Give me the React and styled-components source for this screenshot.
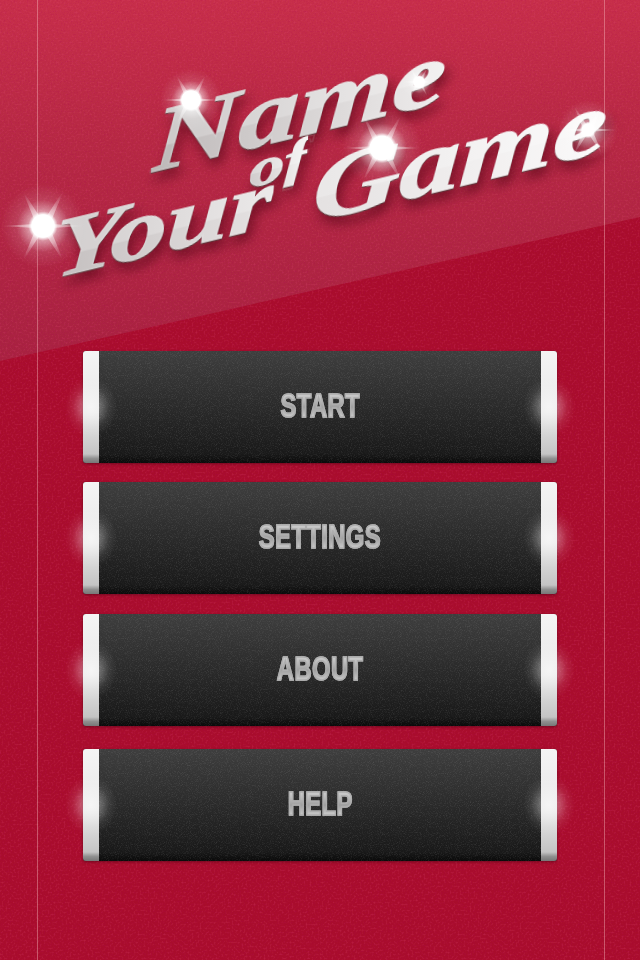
import styled, { createGlobalStyle } from "styled-components";

// speckle texture, the paper grain on the page and the buttons
const noise = (rgb, freq, gain) =>
  `url("data:image/svg+xml;utf8,${encodeURIComponent(
    `<svg xmlns='http://www.w3.org/2000/svg' width='320' height='320'><filter id='n'><feTurbulence type='fractalNoise' baseFrequency='${freq}' numOctaves='2' stitchTiles='stitch'/><feColorMatrix values='0 0 0 0 ${rgb[0]} 0 0 0 0 ${rgb[1]} 0 0 0 0 ${rgb[2]} ${gain} 0 0 0 ${-gain * 0.48}'/></filter><rect width='320' height='320' filter='url(#n)'/></svg>`
  )}")`;

const GlobalStyle = createGlobalStyle`
  html, body {
    margin: 0;
    padding: 0;
    background: #aa0f2e;
  }
`;

const Page = styled.div`
  position: relative;
  width: 640px;
  height: 960px;
  overflow: hidden;
  background: #a90d2c;
  font-family: "Liberation Sans", Arial, sans-serif;

  &::after {
    content: "";
    position: absolute;
    inset: 0;
    background-image: ${noise([0.78, 0.08, 0.2], 0.5, 1.2)},
      ${noise([0.42, 0, 0.1], 0.7, 1.1)};
    opacity: 0.55;
    pointer-events: none;
  }
`;

const Glass = styled.div`
  position: absolute;
  inset: 0 0 auto 0;
  height: 362px;
  background: linear-gradient(180deg, #c72f49 0%, #b62943 40%, #a82240 100%);
  clip-path: polygon(0 0, 640px 0, 640px 217px, 0 361px);
`;

const Rail = styled.div`
  position: absolute;
  top: 0;
  bottom: 0;
  left: ${(props) => props.$left}px;
  width: 1px;
  background: rgba(255, 205, 205, 0.38);
  z-index: 1;
`;

const Logo = styled.header`
  position: relative;
  z-index: 2;
  height: 351px;
  box-sizing: border-box;
  padding: 119px 0 0 53px;
`;

const Lettering = styled.div`
  display: flex;
  flex-direction: column;
  width: 300px;
  transform-origin: left bottom;
  transform: rotate(-13.6deg) scaleX(1.42) skewX(-12deg);
  filter: drop-shadow(0.7px 1px 0 rgba(85, 65, 65, 0.85))
    drop-shadow(3px 8px 5px rgba(70, 0, 15, 0.55));
`;

const LogoRow = styled.div`
  display: flex;
  align-items: baseline;
  height: 87px;
  padding-left: ${(props) => props.$indent || 0}px;
`;

const Word = styled.span`
  margin-left: ${(props) => props.$gap || 0}px;
  transform: translateY(${(props) => props.$lift || 0}px);
  font-family: "Liberation Serif", "Times New Roman", serif;
  font-style: italic;
  font-weight: 700;
  font-size: ${(props) => props.$size}px;
  line-height: 1;
  white-space: nowrap;
  color: transparent;
  -webkit-text-stroke: 1.2px rgba(255, 255, 255, 0.12);
  background: linear-gradient(
      rgba(255, 255, 255, 0.22) 0%,
      rgba(255, 255, 255, 0.22) 58%,
      rgba(255, 255, 255, 0) 59%
    ),
    linear-gradient(90deg, ${(props) => props.$from}, ${(props) => props.$to});
  -webkit-background-clip: text;
  background-clip: text;
`;

const SparkSvg = styled.svg`
  position: absolute;
  left: ${(props) => props.$x - props.$size / 2}px;
  top: ${(props) => props.$y - props.$size / 2}px;
  width: ${(props) => props.$size}px;
  height: ${(props) => props.$size}px;
  z-index: 3;
`;

function Sparkle({ x, y, size = 60, core = 0.4 }) {
  const id = `spark-${x}`;
  return (
    <SparkSvg $x={x} $y={y} $size={size} viewBox="-30 -30 60 60">
      <defs>
        <radialGradient id={id}>
          <stop offset="0" stopColor="#fff" />
          <stop offset={core} stopColor="#fff" />
          <stop offset={core + 0.08} stopColor="#fff" stopOpacity="0.5" />
          <stop offset="0.62" stopColor="#fff" stopOpacity="0.12" />
          <stop offset="1" stopColor="#fff" stopOpacity="0" />
        </radialGradient>
        <radialGradient id={`${id}-rays`}>
          <stop offset="0" stopColor="#fff" stopOpacity="0.8" />
          <stop offset="1" stopColor="#fff" stopOpacity="0" />
        </radialGradient>
      </defs>
      <path
        d="M-30 0 L-5 -1.5 L-15 -26 L-2 -6 L0 -8 L2 -6 L15 -26 L5 -1.5 L30 0 L5 1.5 L15 26 L2 6 L-2 6 L-15 26 L-5 1.5 Z"
        fill={`url(#${id}-rays)`}
      />
      <circle r="30" fill={`url(#${id})`} />
    </SparkSvg>
  );
}

const Menu = styled.nav`
  position: relative;
  z-index: 2;
  display: flex;
  flex-direction: column;
  padding: 0 83px;
`;

const MenuButton = styled.div`
  position: relative;
  display: flex;
  align-items: center;
  justify-content: center;
  height: 112px;
  margin-top: ${(props) => props.$top}px;
  border-radius: 3px;
  box-shadow: 0 1px 3px rgba(60, 0, 15, 0.5);
  background-image: ${noise([0.5, 0.5, 0.5], 1.1, 0.4)},
    linear-gradient(180deg, #3e3e3e 0%, #303030 35%, #191919 92%, #0f0f0f 97%, #0a0a0a 100%);
`;

const Cap = styled.div`
  position: absolute;
  top: 0;
  bottom: 0;
  ${(props) => props.$side}: 0;
  width: 16px;
  border-radius: ${(props) => (props.$side === "left" ? "3px 0 0 3px" : "0 3px 3px 0")};
  background: linear-gradient(180deg, #f4f4f4 0%, #e8e8e8 55%, #c4c4c4 92%, #8f8f8f 96%, #777 100%);
`;

const Glow = styled.div`
  position: absolute;
  top: 50%;
  ${(props) => props.$side}: -18px;
  width: 52px;
  height: 60px;
  transform: translateY(-50%);
  border-radius: 50%;
  background: radial-gradient(
    closest-side,
    rgba(255, 255, 255, 0.55),
    rgba(255, 255, 255, 0.3) 35%,
    rgba(255, 255, 255, 0.08) 70%,
    rgba(255, 255, 255, 0)
  );
`;

const Label = styled.span`
  position: relative;
  font-weight: 700;
  font-size: 33px;
  letter-spacing: 0.6px;
  line-height: 1;
  margin-top: -3px;
  color: transparent;
  -webkit-text-stroke: 1.6px #aeaeae;
  background: linear-gradient(180deg, #c8c8c8 20%, #a0a0a0 55%, #cacaca 85%);
  -webkit-background-clip: text;
  background-clip: text;
  transform: scaleX(0.72);
`;

const items = [
  { label: "START", top: 0 },
  { label: "SETTINGS", top: 19 },
  { label: "ABOUT", top: 20 },
  { label: "HELP", top: 23 },
];

export default function App() {
  return (
    <Page>
      <GlobalStyle />
      <Glass />
      <Rail $left={37} />
      <Rail $left={604} />
      <Logo>
        <Lettering>
          <LogoRow $indent={67}>
            <Word $size={87} $lift={6} $from="#bdb8b8" $to="#efeded">
              Name
            </Word>
          </LogoRow>
          <LogoRow>
            <Word $size={81} $from="#c4bfbf" $to="#e6e3e3">
              Your
            </Word>
            <Word $size={50} $gap={-18} $lift={-42} $from="#d0cccc" $to="#f4f2f2">
              of
            </Word>
            <Word $size={87} $gap={6} $lift={6} $from="#e4e1e1" $to="#fbfafa">
              Game
            </Word>
          </LogoRow>
        </Lettering>
        <Sparkle x={191} y={100} size={62} core={0.3} />
        <Sparkle x={419} y={82} size={36} core={0.3} />
        <Sparkle x={382} y={148} size={80} core={0.3} />
        <Sparkle x={43} y={226} size={84} core={0.27} />
        <Sparkle x={588} y={130} size={60} core={0.2} />
      </Logo>
      <Menu>
        {items.map((item) => (
          <MenuButton key={item.label} $top={item.top}>
            <Cap $side="left" />
            <Cap $side="right" />
            <Glow $side="left" />
            <Glow $side="right" />
            <Label>{item.label}</Label>
          </MenuButton>
        ))}
      </Menu>
    </Page>
  );
}
